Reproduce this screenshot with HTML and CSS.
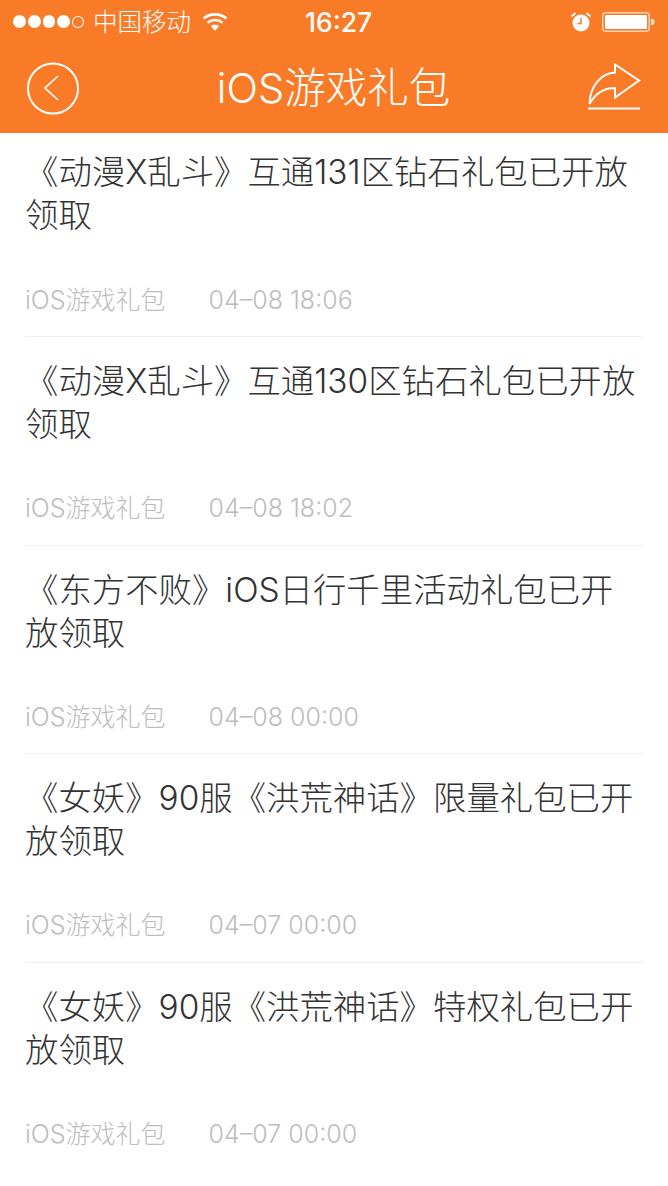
FILE: index.html
```html
<!DOCTYPE html>
<html lang="zh-CN">
<head>
<meta charset="utf-8">
<title>iOS游戏礼包</title>
<link rel="stylesheet" href="styles.css">
</head>
<body>
<header class="top">
  <div class="status">
    <div class="status-left">
      <span class="dots"><i class="dot"></i><i class="dot"></i><i class="dot"></i><i class="dot"></i><i class="dot empty"></i></span>
      <span class="carrier">中国移动</span>
      <svg class="wifi" width="26" height="20" viewBox="0 0 26 20"><path d="M1.5 6.5C8 1 18 1 24.500 6.500" fill="none" stroke="#fff" stroke-width="2.600"/><path d="M5.500 10.700C10 7 16 7 20.500 10.700" fill="none" stroke="#fff" stroke-width="2.600"/><path d="M8.800 14C11 12.300 15 12.300 17.200 14L13 19Z" fill="#fff"/></svg>
    </div>
    <span class="time">16:27</span>
    <div class="status-right">
      <svg class="alarm" width="22" height="22" viewBox="0 0 22 22"><circle cx="11" cy="12" r="8.500" fill="#fff"/><path d="M11 7v5.500H7.500" fill="none" stroke="#f97b28" stroke-width="1.500"/><path d="M1.500 5.500 5.500 2M20.500 5.500 16.500 2" stroke="#fff" stroke-width="1.800" fill="none"/></svg>
      <svg class="battery" width="53" height="22" viewBox="0 0 53 22"><rect x="0.750" y="1.750" width="46.500" height="18.500" rx="3" fill="none" stroke="#fff" stroke-opacity=".65" stroke-width="1.500"/><rect x="3" y="4" width="42" height="14" rx="1" fill="#fff"/><path d="M49 8h1.500a2 2 0 0 1 2 2v2a2 2 0 0 1-2 2H49Z" fill="#fff" fill-opacity=".75"/></svg>
    </div>
  </div>
  <nav class="nav">
    <svg class="back" width="54" height="54" viewBox="0 0 54 54"><circle cx="27" cy="27.500" r="25" fill="none" stroke="#fff" stroke-width="2"/><path d="M32 15 19 27 32 39" fill="none" stroke="#fff" stroke-width="1.700"/></svg>
    <h1 class="nav-title">iOS游戏礼包</h1>
    <svg class="share" width="54" height="48" viewBox="0 0 54 48"><path d="M2.500 41C3 22 15 10 28 9.500V1.500L52 17.500 28 34.500V25C17 25 8 31 2.500 41Z" fill="none" stroke="#fff" stroke-width="2"/><path d="M1 45.500H53" stroke="#fff" stroke-width="2"/></svg>
  </nav>
</header>
<main class="list">
  <article class="item">
    <h2 class="item-title">《动漫X乱斗》互通131区钻石礼包已开放领取</h2>
    <p class="meta"><span>iOS游戏礼包</span><span>04–08 18:06</span></p>
  </article>
  <article class="item">
    <h2 class="item-title">《动漫X乱斗》互通130区钻石礼包已开放领取</h2>
    <p class="meta"><span>iOS游戏礼包</span><span>04–08 18:02</span></p>
  </article>
  <article class="item">
    <h2 class="item-title">《东方不败》iOS日行千里活动礼包已开放领取</h2>
    <p class="meta"><span>iOS游戏礼包</span><span>04–08 00:00</span></p>
  </article>
  <article class="item">
    <h2 class="item-title">《女妖》90服《洪荒神话》限量礼包已开放领取</h2>
    <p class="meta"><span>iOS游戏礼包</span><span>04–07 00:00</span></p>
  </article>
  <article class="item">
    <h2 class="item-title">《女妖》90服《洪荒神话》特权礼包已开放领取</h2>
    <p class="meta"><span>iOS游戏礼包</span><span>04–07 00:00</span></p>
  </article>
</main>
</body>
</html>
```
FILE: styles.css
```css
* { box-sizing: border-box; }
html, body { margin: 0; padding: 0; }
body {
  width: 668px;
  height: 1186px;
  overflow: hidden;
  background: #fff;
  font-family: Inter, "Noto Sans CJK SC", sans-serif;
  font-weight: 300;
}
.top {
  height: 133px;
  background: #f97b28;
  color: #fff;
}
.status {
  height: 43px;
  padding: 0 13px 0 13px;
  display: flex;
  align-items: center;
  justify-content: space-between;
  position: relative;
}
.status-left { display: flex; align-items: center; }
.dots { display: flex; gap: 2px; width: 71px; }
.dot { width: 13px; height: 13px; border-radius: 50%; background: #fff; display: block; }
.dot.empty { background: none; border: 1px solid #fff; width: 12px; height: 12px; margin-top: 1px; }
.carrier { margin-left: 9px; font-size: 24.500px; line-height: 30px; width: 98px; white-space: nowrap; }
.wifi { margin-left: 11px; }
.time {
  position: absolute;
  left: 305px;
  top: 7px;
  font-size: 26.500px;
  line-height: 30px;
  font-weight: 500;
}
.status-right { display: flex; align-items: center; gap: 10px; }
.nav {
  height: 90px;
  padding: 0 27px 0 26px;
  display: flex;
  align-items: center;
  justify-content: space-between;
}
.share { margin-top: -2px; }
.nav-title {
  margin: 0;
  font-size: 41.500px;
  line-height: 46px;
  font-weight: 300;
}
.list { padding: 0 25px; }
.item {
  height: 208.800px;
  padding-top: 23px;
  border-bottom: 1px solid #f0f0f0;
}
.item:first-child { height: 203.800px; padding-top: 18px; }
.item:last-child { border-bottom: 0; }
.item-title {
  margin: 0;
  height: 85px;
  font-size: 33.400px;
  line-height: 43px;
  font-weight: 300;
  color: #333;
}
.meta {
  margin: 0;
  padding-top: 48px;
  display: flex;
  gap: 43px;
  font-size: 25px;
  line-height: 30px;
  color: #bdbdbd;
}
.item:first-child .meta { padding-top: 49px; }
```
